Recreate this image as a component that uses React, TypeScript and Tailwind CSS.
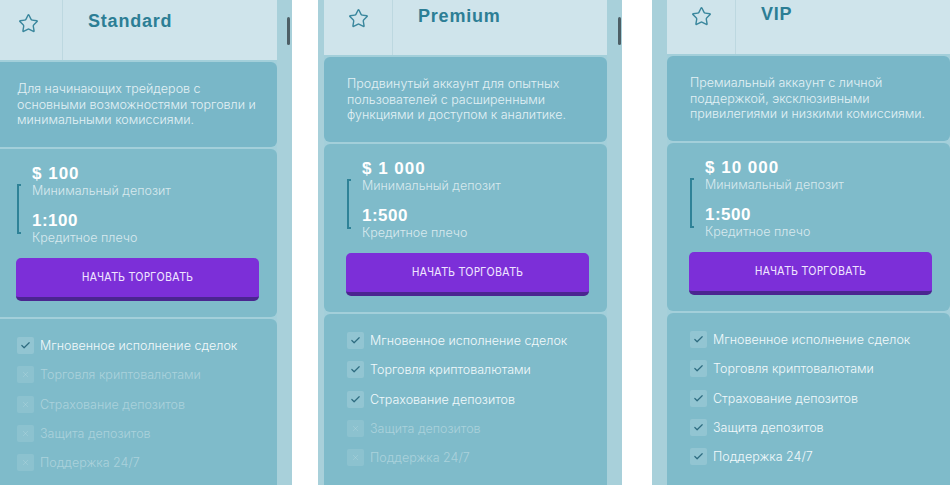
import React from "react";
import { Star, Check, X } from "lucide-react";

type Plan = {
  name: string;
  desc: string[];
  deposit: string;
  leverage: string;
  enabled: number;
};

const FEATURES = [
  "Мгновенное исполнение сделок",
  "Торговля криптовалютами",
  "Страхование депозитов",
  "Защита депозитов",
  "Поддержка 24/7",
];

const PLANS: Plan[] = [
  {
    name: "Standard",
    desc: [
      "Для начинающих трейдеров с",
      "основными возможностями торговли и",
      "минимальными комиссиями.",
    ],
    deposit: "$ 100",
    leverage: "1:100",
    enabled: 1,
  },
  {
    name: "Premium",
    desc: [
      "Продвинутый аккаунт для опытных",
      "пользователей с расширенными",
      "функциями и доступом к аналитике.",
    ],
    deposit: "$ 1 000",
    leverage: "1:500",
    enabled: 3,
  },
  {
    name: "VIP",
    desc: [
      "Премиальный аккаунт с личной",
      "поддержкой, эксклюзивными",
      "привилегиями и низкими комиссиями.",
    ],
    deposit: "$ 10 000",
    leverage: "1:500",
    enabled: 5,
  },
];

const body = "font-['Inter','Noto_Sans',sans-serif]";
const strong = "font-['Liberation_Sans','Arial',sans-serif]";

function Card({
  plan,
  shift,
  headH,
  headPad,
}: {
  plan: Plan;
  shift: string;
  headH: string;
  headPad: string;
}) {
  return (
    <div className={`w-[283px] shrink-0 flex flex-col gap-[2px] bg-[#a3cfda] ${shift}`}>
      {/* header */}
      <div className={`${headH} shrink-0 flex bg-[#cfe4eb]`}>
        <div className={`w-[69px] border-r border-[#bdd8e0] flex justify-center ${headPad}`}>
          <div className="pt-[4px]">
            <Star size={21} strokeWidth={1.6} color="#3a879d" />
          </div>
        </div>
        <div className={headPad}>
          <div
            className={`pl-[25px] text-[18px] leading-[24px] font-bold tracking-[0.8px] text-[#2c7e95] ${strong}`}
          >
            {plan.name}
          </div>
        </div>
      </div>
      {/* description */}
      <div className="h-[85px] shrink-0 rounded-[6px] bg-[#79b7c8] px-[23px] pt-[19px]">
        {plan.desc.map((l) => (
          <div
            key={l}
            className={`text-[12.5px] leading-[15.5px] font-light text-[#e3f1f5] whitespace-nowrap ${body}`}
          >
            {l}
          </div>
        ))}
      </div>
      {/* stats */}
      <div className="h-[168px] shrink-0 rounded-[6px] bg-[#7fbbca] pt-[16px] pl-[22px] pr-[18px] flex flex-col">
        <div className="flex">
          <div className="mt-[19px] h-[50px] w-[4px] border-l-[2px] border-t-[2px] border-b-[2px] border-[#2f8297] ml-[1px] mr-[11px]" />
          <div className="flex flex-col">
            <div className={`text-[17px] leading-[18px] font-bold tracking-[1px] text-white ${strong}`}>
              {plan.deposit}
            </div>
            <div className={`text-[12.5px] leading-[15px] font-light text-white/70 ${body}`}>
              Минимальный депозит
            </div>
            <div className={`mt-[14px] text-[17px] leading-[18px] font-bold tracking-[0.5px] text-white ${strong}`}>
              {plan.leverage}
            </div>
            <div className={`text-[12.5px] leading-[15px] font-light text-white/70 ${body}`}>
              Кредитное плечо
            </div>
          </div>
        </div>
        <button
          className={`mt-[13px] h-[43px] shrink-0 w-full rounded-[5px] bg-[#7c2fd8] border-b-[4px] border-[#4b2590] text-[11.5px] tracking-[0.2px] text-[#efe4ff] font-['DejaVu_Sans_Condensed','DejaVu_Sans',sans-serif]`}
        >
          НАЧАТЬ ТОРГОВАТЬ
        </button>
      </div>
      {/* features */}
      <div className="shrink-0 rounded-[6px] bg-[#7fbbca] pt-[12px] pl-[23px] pb-[40px]">
        {FEATURES.map((f, i) => {
          const on = i < plan.enabled;
          return (
            <div key={f} className="h-[29.3px] flex items-center gap-[6px]">
              <div
                className={`w-[17px] h-[17px] rounded-[2px] flex items-center justify-center ${
                  on ? "bg-white/15" : "bg-white/10"
                }`}
              >
                {on ? (
                  <Check size={11} strokeWidth={2.6} color="#2e6c80" />
                ) : (
                  <X size={9} strokeWidth={2} color="rgba(255,255,255,0.18)" />
                )}
              </div>
              <span
                className={`text-[12.5px] leading-[15px] font-light whitespace-nowrap ${body} ${
                  on ? "text-[#f2f9fb]" : "text-white/35"
                }`}
              >
                {f}
              </span>
            </div>
          );
        })}
      </div>
    </div>
  );
}

function Thumb() {
  return <div className="mt-[17px] w-[3px] h-[28px] rounded-full bg-[#4d5f66]" />;
}

export default function App() {
  return (
    <div className="w-[950px] h-[485px] overflow-hidden bg-white flex">
      {/* panel 1 */}
      <div className="h-[485px] flex shrink-0 ml-[-6px] overflow-hidden bg-[#a8d0da]">
        <Card plan={PLANS[0]} shift="" headH="h-[60px]" headPad="pt-[9px]" />
        <div className="w-[15px] flex pl-[10px]">
          <Thumb />
        </div>
      </div>
      {/* panel 2 */}
      <div className="h-[485px] flex shrink-0 ml-[26px] overflow-hidden bg-[#a8d0da] pl-[6px]">
        <Card plan={PLANS[1]} shift="mt-[-4px]" headH="h-[59px]" headPad="pt-[8px]" />
        <div className="w-[15px] flex pl-[11px]">
          <Thumb />
        </div>
      </div>
      {/* panel 3 */}
      <div className="h-[485px] flex shrink-0 ml-[30px] overflow-hidden bg-[#a8d0da] pl-[15px]">
        <Card plan={PLANS[2]} shift="mt-[-2px]" headH="h-[56px]" headPad="pt-[4px]" />
      </div>
    </div>
  );
}
